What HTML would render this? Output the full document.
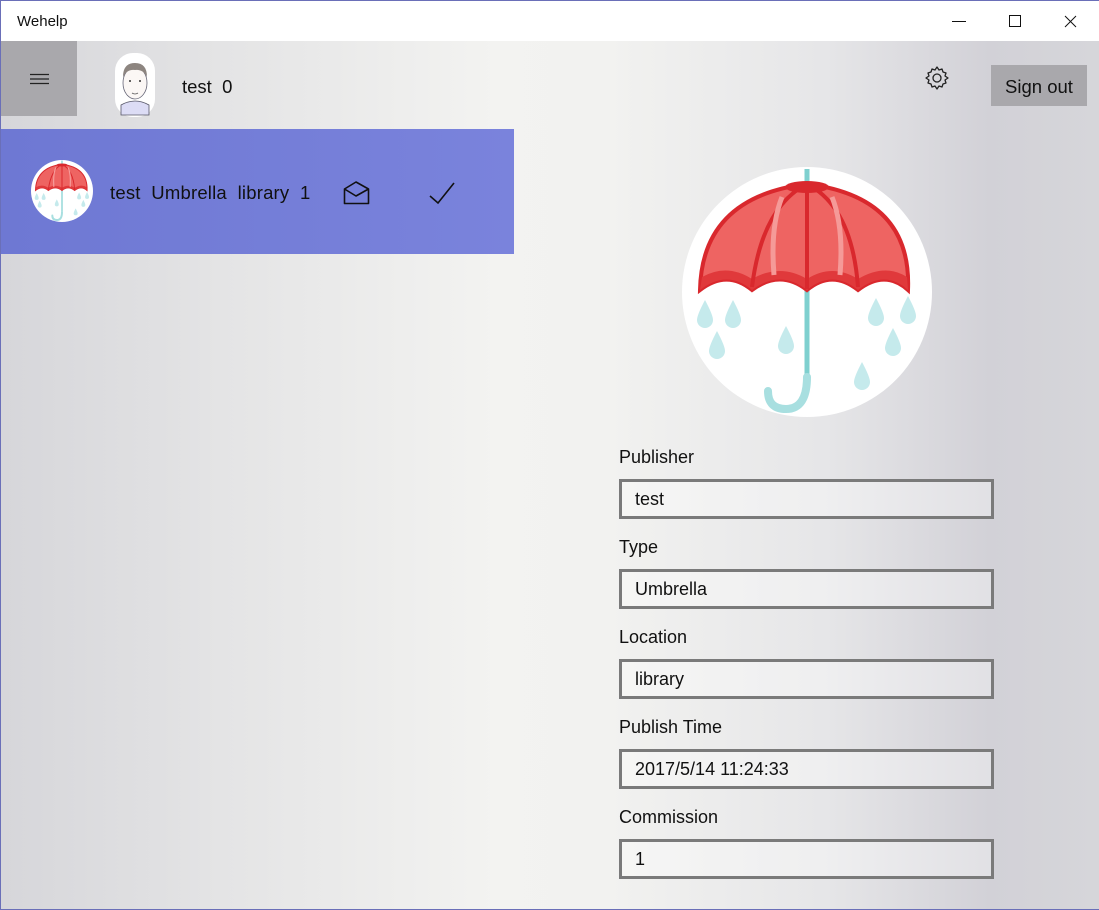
<!DOCTYPE html>
<html><head><meta charset="utf-8"><style>
*{margin:0;padding:0;box-sizing:border-box}
body{width:1099px;height:910px;overflow:hidden;font-family:"Segoe UI","Liberation Sans",sans-serif;position:relative;color:#111}
#win{position:absolute;left:0;top:0;width:1099px;height:910px;border:1px solid #6a6fb8;border-right:none}
#title{position:absolute;left:1px;top:1px;width:1098px;height:40px;background:#fff}
#title span{position:absolute;left:16px;top:12px;font-size:15px}
#bg{position:absolute;left:1px;top:41px;width:1098px;height:868px;
background:linear-gradient(90deg,#d6d6da 0%,#e4e4e5 20%,#f3f3f1 45%,#f2f2f0 55%,#e6e6e8 75%,#d2d1d7 90%,#d6d6da 100%)}
.abs{position:absolute}
.lbl{position:absolute;left:619px;font-size:18px}
.box{position:absolute;left:619px;width:375px;height:40px;border:3px solid #7a7a7a;background:rgba(255,255,255,0.35);font-size:18px;padding-left:13px;line-height:35px}
</style></head><body>
<div id="win"></div>
<div id="title"><span>Wehelp</span>
<svg class="abs" style="left:948px;top:12px" width="130" height="18"><line x1="3" y1="8.5" x2="17" y2="8.5" stroke="#111"/><rect x="60.5" y="2.5" width="11" height="11" fill="none" stroke="#111"/><path d="M116 3 L127 14 M127 3 L116 14" stroke="#111"/></svg>
</div>
<div id="bg"></div>
<div class="abs" style="left:1px;top:41px;width:76px;height:75px;background:#a9a8ac"></div>
<svg class="abs" style="left:30px;top:73px" width="20" height="12"><path d="M0 1.5H19M0 6H19M0 10.5H19" stroke="#222" stroke-width="1.2"/></svg>
<svg class="abs" style="left:115px;top:53px" width="40" height="64" viewBox="0 0 40 64">
<rect x="0" y="0" width="40" height="64" rx="18" fill="#fff"/>
<path d="M6 52 Q20 44 34 52 V62 H6Z" fill="#dcdcf5" stroke="#556" stroke-width="0.8"/>
<ellipse cx="20" cy="30" rx="12" ry="16" fill="#fbf7f5" stroke="#667" stroke-width="0.8"/>
<path d="M8 24 Q8 10 20 10 Q32 10 32 24 Q28 16 20 17 Q12 16 8 24Z" fill="#8d8580"/>
<circle cx="15" cy="28" r="1" fill="#333"/><circle cx="25" cy="28" r="1" fill="#333"/>
<path d="M17 40 Q20 42 23 40" stroke="#555" fill="none" stroke-width="0.8"/>
</svg>
<div class="abs" style="left:182px;top:76px;font-size:18.5px">test&nbsp; 0</div>
<svg class="abs" style="left:924px;top:65px" width="26" height="26" viewBox="0 0 26 26"><path d="M13 2 l2 3 3-1 1 3 3 1-1 3 3 2-3 2 1 3-3 1-1 3-3-1-2 3-2-3-3 1-1-3-3-1 1-3-3-2 3-2-1-3 3-1 1-3 3 1z" fill="none" stroke="#222" stroke-width="1.3" stroke-linejoin="round"/><circle cx="13" cy="13" r="4" fill="none" stroke="#222" stroke-width="1.3"/></svg>
<div class="abs" style="left:991px;top:65px;width:96px;height:41px;background:#a9a8ac;font-size:18.5px;text-align:center;line-height:43px">Sign out</div>
<div class="abs" style="left:1px;top:129px;width:513px;height:125px;background:linear-gradient(90deg,#6e78d3,#7a83dc)"></div>
<div class="abs" style="left:110px;top:182px;font-size:18.5px;letter-spacing:0.2px">test&nbsp; Umbrella&nbsp; library&nbsp; 1</div>
<svg class="abs" style="left:340px;top:178px" width="120" height="30"><path d="M4.5 11 L16 4 L28.5 11 V25.5 H4.5Z M4.5 11 L16 18 L28.5 11" fill="none" stroke="#111" stroke-width="1.6" stroke-linejoin="round"/><path d="M90 18 L98 25 L114 5" fill="none" stroke="#111" stroke-width="1.6"/></svg>
<svg class="abs" style="left:682px;top:167px" width="250" height="250" viewBox="0 0 250 250">
<defs><g id="umb">
<circle cx="125" cy="125" r="125" fill="#fff"/>
<line x1="125" y1="2" x2="125" y2="214" stroke="#7fd0cf" stroke-width="5"/>
<path d="M125 210 Q125 242 104 242 Q86 242 86 224" fill="none" stroke="#a8dfe0" stroke-width="8" stroke-linecap="round"/>
<path d="M18 123 Q20 30 125 17 Q230 30 226 123 Q203 102 176 123 Q150 102 125 123 Q98 102 70 123 Q45 102 18 123Z" fill="#ee6462" stroke="#d9282d" stroke-width="4"/>
<path d="M20 110 Q45 96 70 112 Q98 96 125 112 Q150 96 176 112 Q203 96 225 110 L226 123 Q203 102 176 123 Q150 102 125 123 Q98 102 70 123 Q45 102 18 123Z" fill="#e0393b"/>
<path d="M125 17 V122 M125 17 Q80 40 70 120 M125 17 Q170 40 176 120" stroke="#d9282d" stroke-width="4" fill="none"/>
<path d="M100 30 Q88 60 92 108 M150 30 Q162 60 158 108" stroke="#f59a98" stroke-width="5" fill="none"/>
<ellipse cx="125" cy="20" rx="22" ry="6" fill="#d9282d"/>
<g fill="#c5eaec">
<path d="M23 133 Q31 148 31 153 A8 8 0 0 1 15 153 Q15 148 23 133Z"/>
<path d="M51 133 Q59 148 59 153 A8 8 0 0 1 43 153 Q43 148 51 133Z"/>
<path d="M35 164 Q43 179 43 184 A8 8 0 0 1 27 184 Q27 179 35 164Z"/>
<path d="M104 159 Q112 174 112 179 A8 8 0 0 1 96 179 Q96 174 104 159Z"/>
<path d="M194 131 Q202 146 202 151 A8 8 0 0 1 186 151 Q186 146 194 131Z"/>
<path d="M226 129 Q234 144 234 149 A8 8 0 0 1 218 149 Q218 144 226 129Z"/>
<path d="M211 161 Q219 176 219 181 A8 8 0 0 1 203 181 Q203 176 211 161Z"/>
<path d="M180 195 Q188 210 188 215 A8 8 0 0 1 172 215 Q172 210 180 195Z"/>
</g></g></defs>
<use href="#umb"/>
</svg>
<svg class="abs" style="left:31px;top:160px" width="62" height="62" viewBox="0 0 250 250"><use href="#umb"/></svg>
<div class="lbl" style="top:447px">Publisher</div><div class="box" style="top:479px">test</div>
<div class="lbl" style="top:537px">Type</div><div class="box" style="top:569px">Umbrella</div>
<div class="lbl" style="top:627px">Location</div><div class="box" style="top:659px">library</div>
<div class="lbl" style="top:717px">Publish Time</div><div class="box" style="top:749px">2017/5/14 11:24:33</div>
<div class="lbl" style="top:807px">Commission</div><div class="box" style="top:839px">1</div>
</body></html>
